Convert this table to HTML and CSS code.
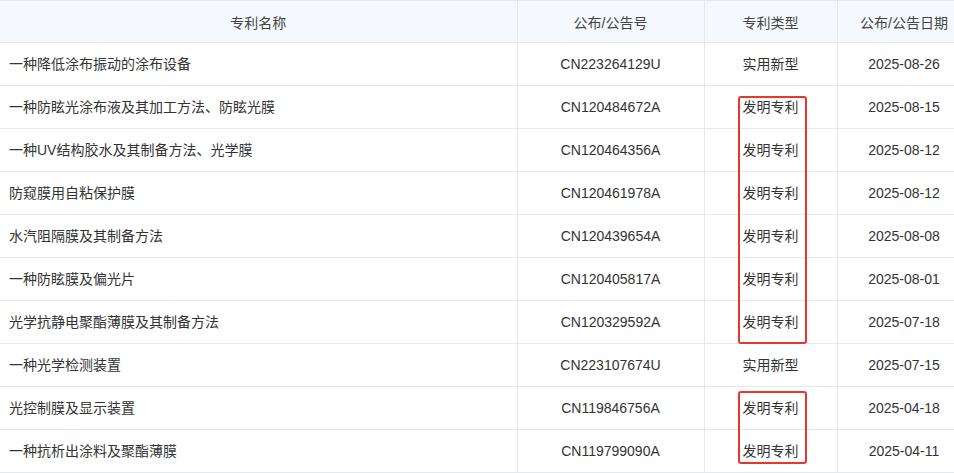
FILE: index.html
```html
<!DOCTYPE html>
<html lang="zh">
<head>
<meta charset="utf-8">
<link rel="stylesheet" href="styles.css">
</head>
<body>
<div class="wrap">
<table class="grid">
<colgroup>
<col class="c-name"><col class="c-no"><col class="c-type"><col class="c-date">
</colgroup>
<thead>
<tr><th>专利名称</th><th>公布/公告号</th><th>专利类型</th><th>公布/公告日期</th></tr>
</thead>
<tbody>
<tr><td class="name">一种降低涂布振动的涂布设备</td><td>CN223264129U</td><td>实用新型</td><td>2025-08-26</td></tr>
<tr><td class="name">一种防眩光涂布液及其加工方法、防眩光膜</td><td>CN120484672A</td><td>发明专利</td><td>2025-08-15</td></tr>
<tr><td class="name">一种UV结构胶水及其制备方法、光学膜</td><td>CN120464356A</td><td>发明专利</td><td>2025-08-12</td></tr>
<tr><td class="name">防窥膜用自粘保护膜</td><td>CN120461978A</td><td>发明专利</td><td>2025-08-12</td></tr>
<tr><td class="name">水汽阻隔膜及其制备方法</td><td>CN120439654A</td><td>发明专利</td><td>2025-08-08</td></tr>
<tr><td class="name">一种防眩膜及偏光片</td><td>CN120405817A</td><td>发明专利</td><td>2025-08-01</td></tr>
<tr><td class="name">光学抗静电聚酯薄膜及其制备方法</td><td>CN120329592A</td><td>发明专利</td><td>2025-07-18</td></tr>
<tr><td class="name">一种光学检测装置</td><td>CN223107674U</td><td>实用新型</td><td>2025-07-15</td></tr>
<tr><td class="name">光控制膜及显示装置</td><td>CN119846756A</td><td>发明专利</td><td>2025-04-18</td></tr>
<tr><td class="name">一种抗析出涂料及聚酯薄膜</td><td>CN119799090A</td><td>发明专利</td><td>2025-04-11</td></tr>
</tbody>
</table>
<div class="mark mark-a"></div>
<div class="mark mark-b"></div>
</div>
</body>
</html>
```
FILE: styles.css
```css
html, body {
  margin: 0;
  padding: 0;
  background: #fff;
  overflow: hidden;
}
.wrap {
  position: relative;
  width: 971px;
}
.grid {
  border-collapse: collapse;
  table-layout: fixed;
  width: 971px;
  font-family: "Liberation Sans", "Noto Sans CJK SC", sans-serif;
  font-size: 14px;
  color: #333;
}
.c-name { width: 517px; }
.c-no { width: 187px; }
.c-type { width: 133px; }
.c-date { width: 134px; }
.grid th {
  height: 42px;
  padding: 0;
  background: #f5f8fc;
  font-weight: normal;
  color: #444;
  text-align: center;
  border: 1px solid #e3e9f1;
  border-left: none;
  box-sizing: border-box;
}
.grid td {
  height: 42px;
  padding: 0;
  text-align: center;
  border-bottom: 1px solid #e3e9f1;
  border-right: 1px solid #e3e9f1;
  line-height: 20px;
}
.grid thead tr { height: 42px; }
.grid td.name {
  text-align: left;
  padding-left: 9px;
}
.mark {
  position: absolute;
  border: 2px solid #e8362d;
  border-radius: 3px;
  box-sizing: border-box;
}
.mark-a {
  left: 738px;
  top: 96px;
  width: 69px;
  height: 248px;
}
.mark-b {
  left: 738px;
  top: 391px;
  width: 69px;
  height: 73px;
}
```
